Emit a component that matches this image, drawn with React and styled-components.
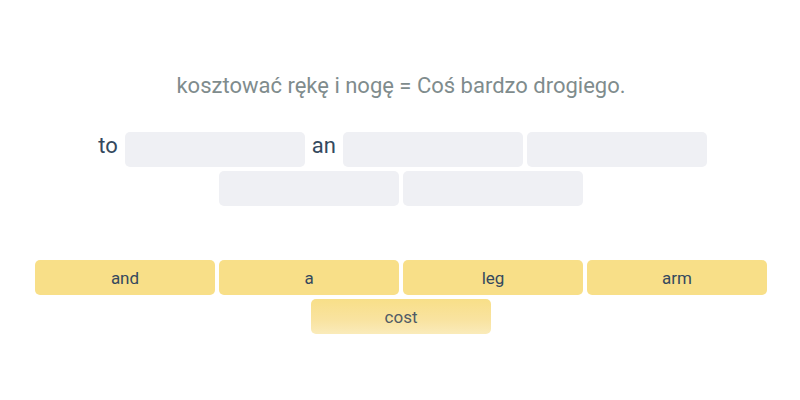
import React from "react";
import styled, { createGlobalStyle } from "styled-components";

const GlobalStyle = createGlobalStyle`
  html, body {
    margin: 0;
    padding: 0;
    background: #ffffff;
    font-family: Roboto, "Noto Sans", "Liberation Sans", sans-serif;
  }
`;

const Page = styled.div`
  width: 800px;
  height: 400px;
  box-sizing: border-box;
  padding: 73px 0 0 2px;
  display: flex;
  flex-direction: column;
  align-items: center;
`;

const Prompt = styled.div`
  font-size: 22px;
  line-height: 26px;
  color: #7f8c8d;
  text-align: center;
`;

const Sentence = styled.div`
  margin-top: 33px;
  width: 740px;
  display: flex;
  flex-wrap: wrap;
  justify-content: center;
  align-items: flex-start;
  gap: 4px;
`;

const Fixed = styled.span`
  padding: 0 3px;
  font-size: 22px;
  line-height: 28px;
  color: #34495e;
`;

const Blank = styled.div`
  width: 180px;
  height: 35px;
  border-radius: 5px;
  background: #eff0f4;
`;

const Bank = styled.div`
  margin-top: 54px;
  width: 740px;
  display: flex;
  flex-wrap: wrap;
  justify-content: center;
  gap: 4px;
`;

const Word = styled.div`
  width: 180px;
  height: 35px;
  border-radius: 5px;
  display: flex;
  align-items: center;
  justify-content: center;
  font-size: 17px;
  color: ${(p) => (p.$fading ? "#505b66" : "#34495e")};
  background: ${(p) =>
    p.$fading
      ? "linear-gradient(to bottom, #f8df88 0%, #f9e3a0 60%, #faebba 100%)"
      : "#f8df88"};
`;

const parts = [
  { text: "to" },
  { blank: true },
  { text: "an" },
  { blank: true },
  { blank: true },
  { blank: true },
  { blank: true },
];

const words = ["and", "a", "leg", "arm", "cost"];

export default function App() {
  return (
    <>
      <GlobalStyle />
      <Page>
        <Prompt>kosztować rękę i nogę = Coś bardzo drogiego.</Prompt>
        <Sentence>
          {parts.map((p, i) =>
            p.blank ? <Blank key={i} /> : <Fixed key={i}>{p.text}</Fixed>
          )}
        </Sentence>
        <Bank>
          {words.map((w) => (
            <Word key={w} $fading={w === "cost"}>
              {w}
            </Word>
          ))}
        </Bank>
      </Page>
    </>
  );
}
